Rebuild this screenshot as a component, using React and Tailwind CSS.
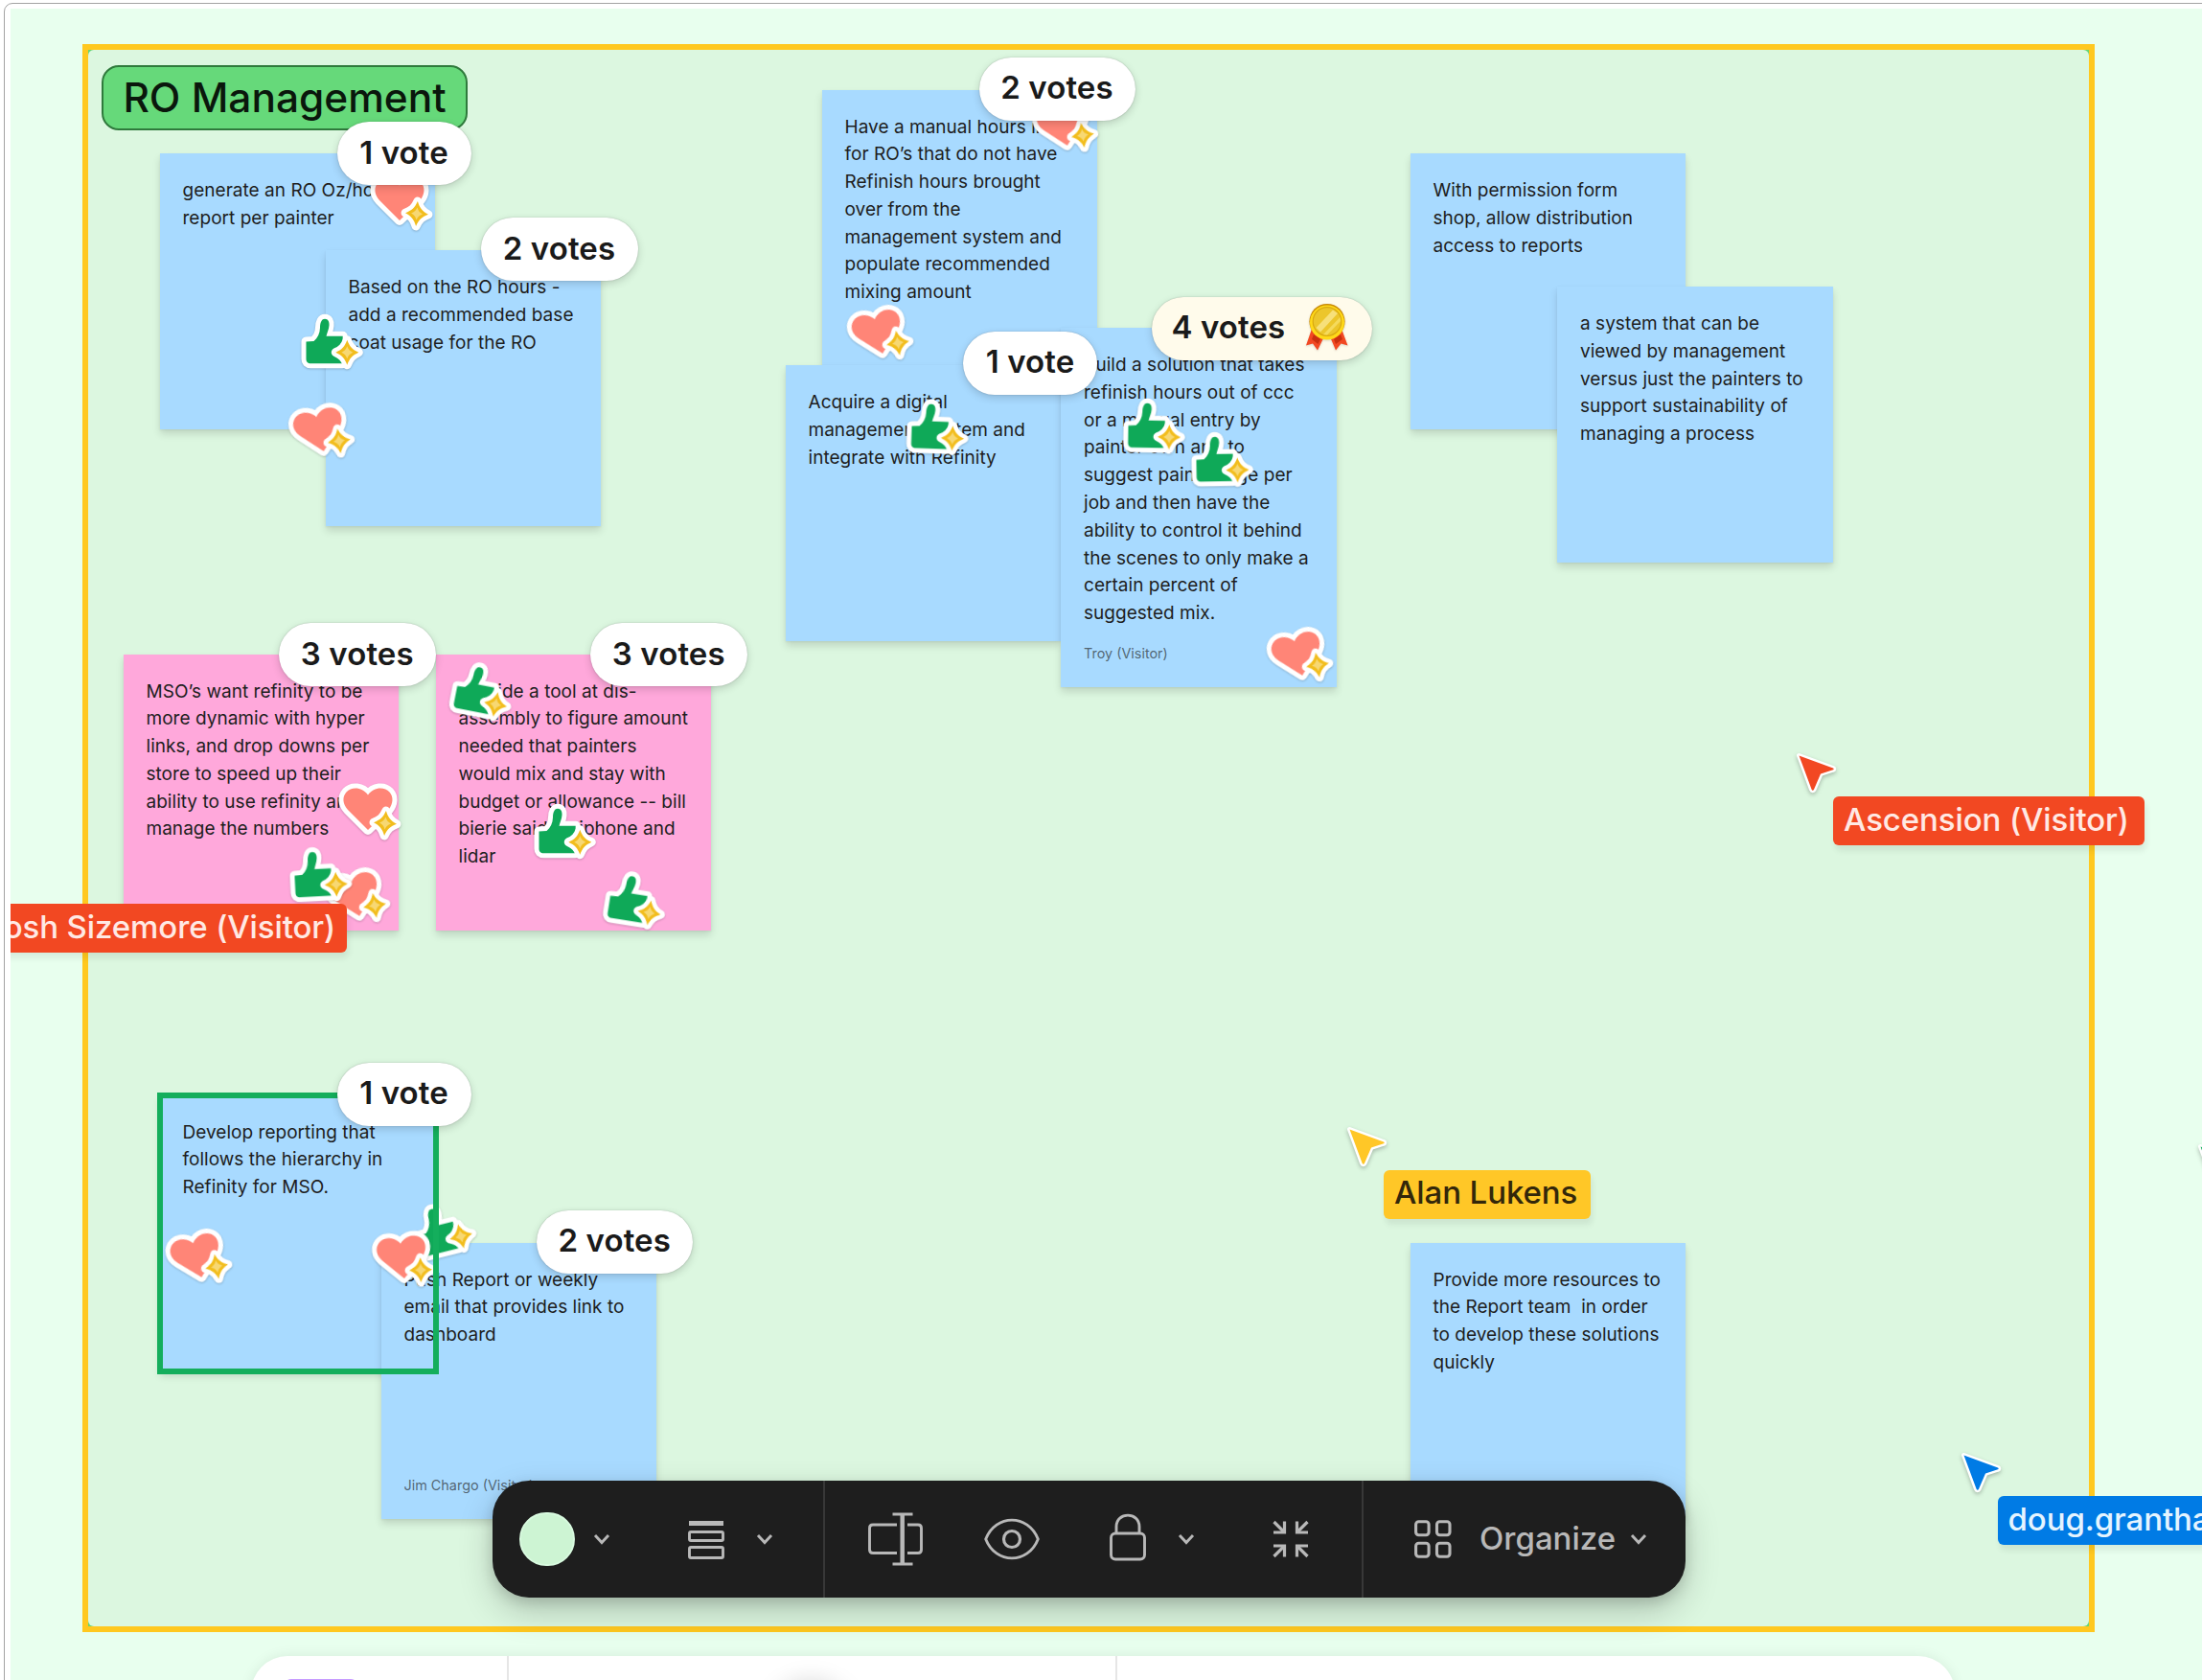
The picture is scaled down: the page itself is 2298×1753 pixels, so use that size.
import React from 'react';
import clsx from 'clsx';

const notes = [
  { x: 166.5, y: 160, lines: ['generate an RO Oz/hour', 'report per painter'] },
  { x: 339.5, y: 261, lines: ['Based on the RO hours -', 'add a recommended base', 'coat usage for the RO'] },
  {
    x: 857.5, y: 93.5,
    lines: ['Have a manual hours input', 'for RO’s that do not have', 'Refinish hours brought', 'over from the', 'management system and', 'populate recommended', 'mixing amount'],
  },
  { x: 819.5, y: 381, lines: ['Acquire a digital', 'management system and', 'integrate with Refinity'] },
  {
    x: 1107, y: 342, h: 375, author: 'Troy (Visitor)',
    lines: ['Build a solution that takes', 'refinish hours out of ccc', 'or a manual entry by', 'painter own and to', 'suggest paint usage per', 'job and then have the', 'ability to control it behind', 'the scenes to only make a', 'certain percent of', 'suggested mix.'],
  },
  { x: 1471.5, y: 160, lines: ['With permission form', 'shop, allow distribution', 'access to reports'] },
  {
    x: 1625, y: 299,
    lines: ['a system that can be', 'viewed by management', 'versus just the painters to', 'support sustainability of', 'managing a process'],
  },
  {
    x: 128.5, y: 682.5, pink: true,
    lines: ['MSO’s want refinity to be', 'more dynamic with hyper', 'links, and drop downs per', 'store to speed up their', 'ability to use refinity and', 'manage the numbers'],
  },
  {
    x: 454.5, y: 682.5, pink: true,
    lines: ['Provide a tool at dis-', 'assembly to figure amount', 'needed that painters', 'would mix and stay with', 'budget or allowance -- bill', 'bierie said an iphone and', 'lidar'],
  },
  { x: 166.5, y: 1142.5, lines: ['Develop reporting that', 'follows the hierarchy in', 'Refinity for MSO.'] },
  { x: 397.5, y: 1296.5, author: 'Jim Chargo (Visitor)', lines: ['Push Report or weekly', 'email that provides link to', 'dashboard'] },
  { x: 1471.5, y: 1296.5, lines: ['Provide more resources to', 'the Report team  in order', 'to develop these solutions', 'quickly'] },
];

// x / y are the centre of each sticker
const stickers = [
  { type: 'heart', x: 418, y: 212, r: 0 },
  { type: 'thumb', x: 344, y: 358, r: 0 },
  { type: 'heart', x: 335, y: 453, r: -12 },
  { type: 'heart', x: 1111, y: 134, r: -12 },
  { type: 'heart', x: 918, y: 351, r: -13 },
  { type: 'thumb', x: 976, y: 447, r: 2 },
  { type: 'thumb', x: 1202, y: 445.5, r: 1 },
  { type: 'thumb', x: 1272.5, y: 481, r: -1 },
  { type: 'heart', x: 1356, y: 687, r: -13 },
  { type: 'heart', x: 385, y: 848, r: 0 },
  { type: 'heart', x: 371.5, y: 938, r: -13 },
  { type: 'thumb', x: 332, y: 914, r: -3 },
  { type: 'thumb', x: 500.5, y: 722, r: 11 },
  { type: 'thumb', x: 587, y: 869, r: 0 },
  { type: 'thumb', x: 660.5, y: 939.5, r: 9 },
  { type: 'heart', x: 206.5, y: 1315, r: -14 },
  { type: 'thumb', x: 460.5, y: 1285, r: -14 },
  { type: 'heart', x: 420.5, y: 1316, r: -6 },
];

const votes = [
  { x: 351.5, y: 127, w: 140, text: '1 vote' },
  { x: 501.5, y: 227, w: 164, text: '2 votes' },
  { x: 1021.5, y: 59.5, w: 163, text: '2 votes' },
  { x: 1005, y: 345.5, w: 140, text: '1 vote' },
  { x: 1201.5, y: 309.5, w: 230, text: '4 votes', winner: true },
  { x: 291, y: 650, w: 163.5, text: '3 votes' },
  { x: 616, y: 650, w: 163.5, text: '3 votes' },
  { x: 351.5, y: 1108.5, w: 140, text: '1 vote' },
  { x: 559.5, y: 1262.5, w: 163.5, text: '2 votes' },
];

const cursors = [
  { x: 1877, y: 788, fill: '#f24822', tag: 'bg-[#f24822] text-[#ffe9e4]', name: 'Ascension (Visitor)', w: 325 },
  { x: 1408, y: 1177.5, fill: '#ffc727', tag: 'bg-[#ffc727] text-[#33270a]', name: 'Alan Lukens', w: 216 },
  { x: 2048.5, y: 1518, fill: '#007be5', tag: 'bg-[#007be5] text-[#e5f4ff]', name: 'doug.grantham', w: 260 },
  { x: 2295.5, y: 1196, fill: '#14ae5c' },
];

const STAR = 'M0 -13 C2.6 -6 5.5 -3 12 0 C5.5 3 2.6 6 0 13 C-2.6 6 -5.5 3 -12 0 C-5.5 -3 -2.6 -6 0 -13 Z';
const THUMB = 'M7.5 30.5 L15.5 30 C19.5 26.5 21.8 22 22 16 C22 10 24 6.7 27 6.7 C30.5 6.7 31.8 10 31.5 13.5 C31.2 17.5 29.5 21 28.5 24.7 L45.7 24.7 L45 53.3 L12.5 53.3 C9 53.3 7.5 51.5 7.5 48.5 Z';
const HEART = 'M31 50 L10 29 C4.2 22.5 4.2 15.5 8.5 10.5 C14 4.5 25 5 31 13.5 C37 5 48 4.5 53.5 10.5 C57.8 15.5 57.5 22.5 52.5 29 Z';

function Sticker({ type, x, y, r }) {
  const shape = type === 'heart' ? HEART : THUMB;
  const star = type === 'heart' ? 'translate(49 43) rotate(4)' : 'translate(50.3 41.7)';
  return (
    <svg
      viewBox="0 0 64 64"
      className="absolute h-16 w-16 overflow-visible drop-shadow-[0_1px_1px_rgba(0,0,0,0.2)]"
      style={{ left: x - 32, top: y - 32, transform: `rotate(${r}deg)` }}
    >
      <path d={shape} fill="#fff" stroke="#fff" strokeWidth="10" strokeLinejoin="round" />
      <path d={shape} fill={type === 'heart' ? '#ff8577' : '#0fa958'} />
      <g transform={star}>
        <path d={STAR} fill="#fff" stroke="#fff" strokeWidth="9" strokeLinejoin="round" />
        <path d={STAR} fill="#f2bd1d" />
        <path d={STAR} fill="#f7d873" transform="scale(0.5)" />
      </g>
    </svg>
  );
}

function Note({ x, y, h = 288, pink, author, lines }) {
  return (
    <div
      className={clsx(
        'absolute flex w-[287.5px] flex-col justify-between px-6 pt-[25px] pb-[23px] shadow-[0_5px_8px_rgba(0,0,0,0.13),0_1px_2px_rgba(0,0,0,0.06)]',
        pink ? 'bg-[#ffa8db]' : 'bg-[#a8daff]'
      )}
      style={{ left: x, top: y, height: h }}
    >
      <div className="text-[19px] leading-[28.8px] tracking-[0.03px] whitespace-pre text-[#1e1e1e]">
        {lines.map((line) => (
          <p key={line}>{line}</p>
        ))}
      </div>
      {author && <p className="text-[14.4px] leading-6 whitespace-nowrap text-[#1e1e1e]/65">{author}</p>}
    </div>
  );
}

function Medal() {
  return (
    <svg viewBox="0 0 48 52" className="h-[52px] w-12 overflow-visible drop-shadow-[0_1px_1px_rgba(0,0,0,0.15)]">
      <path d="M8 27 L2 44.5 L9 42.5 L14 49.5 L22 33 Z" fill="#f24822" />
      <path d="M39 27 L45.5 44.5 L38.5 42.5 L33 49.5 L26 33 Z" fill="#f24822" />
      <path d="M10 33 L17 38 L14.5 43 L8 38 Z M38 33 L31 38 L33 43 L40 38 Z" fill="#c9300f" />
      <circle cx="24" cy="19.5" r="18.6" fill="#c98a04" />
      <circle cx="24" cy="20.5" r="18" fill="#ffd91a" />
      <circle cx="24" cy="19.5" r="14.8" fill="#ecc62c" stroke="#d9a90f" strokeWidth="1.2" />
      <path d="M12.5 26 L30 7.5 L35 11 L17 30.5 Z" fill="#f7e07a" />
      <path d="M20 33 L37.5 15 L38 19 L24 33.5 Z" fill="#f5da5c" />
    </svg>
  );
}

function VoteBadge({ x, y, w, text, winner }) {
  return (
    <div
      className={clsx(
        'absolute flex h-[66px] items-center rounded-full pb-px text-[33px] font-[560] tracking-[0.1px] whitespace-nowrap text-[#1a1a1a] shadow-[0_3px_8px_rgba(0,0,0,0.16),0_0_1.5px_rgba(0,0,0,0.25)]',
        winner ? 'justify-between bg-[#fffbeb] pr-[23px] pl-[21px]' : 'justify-center bg-white'
      )}
      style={{ left: x, top: y, width: w }}
    >
      {text}
      {winner && <Medal />}
    </div>
  );
}

function Cursor({ x, y, fill, tag, name, w }) {
  return (
    <div className="absolute" style={{ left: x, top: y }}>
      <svg viewBox="0 0 40 40" className="absolute h-10 w-10 overflow-visible drop-shadow-[0_2px_2px_rgba(0,0,0,0.25)]">
        <path
          d="M0.5 0.5 L36 13.5 C37 14 36.8 15 36 15.2 L23 19.5 L16 35.8 C15.4 37.2 14 37 13.6 35.8 Z"
          fill={fill}
          stroke="#fff"
          strokeWidth="5"
          strokeLinejoin="round"
          paintOrder="stroke"
        />
      </svg>
      {name && <NameTag className={clsx('left-9 top-[43px] pl-[11px]', tag)} name={name} width={w} />}
    </div>
  );
}

function NameTag({ className, name, width }) {
  return (
    <div
      className={clsx(
        'absolute flex h-[51px] items-center rounded-md pb-[2px] text-[33px] font-[550] tracking-[-0.1px] whitespace-nowrap shadow-[2px_6px_6px_rgba(0,0,0,0.07)]',
        className
      )}
      style={{ width }}
    >
      {name}
    </div>
  );
}

function Icon({ children, className, w, h, stroke = 2.9 }) {
  return (
    <svg
      width={w}
      height={h}
      viewBox={`0 0 ${w} ${h}`}
      fill="none"
      stroke="#b8b8b8"
      strokeWidth={stroke}
      className={clsx('shrink-0', className)}
    >
      {children}
    </svg>
  );
}

function Chevron({ className }) {
  return (
    <Icon w={18} h={12} className={className}>
      <path d="M2 2 L9 9.5 L16 2" />
    </Icon>
  );
}

function Toolbar() {
  return (
    <div className="absolute left-[514px] top-[1545px] flex h-[121.5px] w-[1244.5px] rounded-[38px] bg-[#1e1e1e] shadow-[0_14px_36px_rgba(0,0,0,0.2),0_5px_14px_rgba(0,0,0,0.14)]">
      {/* Colour and list style */}
      <div className="flex w-[347px] items-center border-r-2 border-[#383838] pl-[28px]">
        <span className="h-[56px] w-[58px] shrink-0 rounded-full border-2 border-[#d8fadf] bg-[#cdf4d3]" />
        <Chevron className="ml-[19px]" />
        <Icon w={38} h={42} className="ml-[81px]">
          <path d="M1 4.5 H37" strokeWidth="5" />
          <rect x="1.5" y="13.5" width="35" height="9" rx="1.5" />
          <rect x="1.5" y="29.5" width="35" height="11" rx="1.5" />
        </Icon>
        <Chevron className="ml-[33px]" />
      </div>

      {/* Rename, visibility, lock, collapse */}
      <div className="flex w-[562px] items-center border-r-2 border-[#383838] pl-[45px]">
        <Icon w={57} h={58}>
          <path d="M30 14 H5 Q1.5 14 1.5 17.5 V40 Q1.5 43.5 5 43.5 H30 M41 14 H52 Q55.5 14 55.5 17.5 V40 Q55.5 43.5 52 43.5 H41" />
          <path d="M25.5 3 H46.5 M25.5 55 H46.5" />
          <path d="M35.7 3 V55" strokeWidth="4.5" />
        </Icon>
        <Icon w={58} h={44} className="ml-[64px]">
          <path d="M1.7 22 C12 -4.5 46 -4.5 56.3 22 C46 48.5 12 48.5 1.7 22 Z" strokeLinejoin="round" />
          <circle cx="29" cy="22" r="8.5" strokeWidth="3.2" />
        </Icon>
        <Icon w={38} h={50} className="mb-[3px] ml-[73px]">
          <rect x="1.5" y="21" width="35" height="27" rx="4.5" />
          <path d="M7 21 V14 C7 -1.8 31 -1.8 31 14 V21" />
        </Icon>
        <Chevron className="ml-[33px]" />
        <Icon w={38} h={40} className="ml-[81px]" stroke={3.2}>
          <path d="M1.5 2 L12 12.5 M36.5 2 L26 12.5 M1.5 38 L12 27.5 M36.5 38 L26 27.5" />
          <path d="M12.5 1.5 V13 H1 M25.5 1.5 V13 H37 M12.5 38.5 V27 H1 M25.5 38.5 V27 H37" />
        </Icon>
      </div>

      <div className="flex flex-1 items-center pl-[53px]">
        <Icon w={39} h={40} stroke={3.1}>
          <rect x="1.6" y="1.8" width="13.5" height="14" rx="3" />
          <rect x="23.5" y="1.8" width="13.5" height="14" rx="3" />
          <rect x="1.6" y="24.2" width="13.5" height="14" rx="3" />
          <rect x="23.5" y="24.2" width="13.5" height="14" rx="3" />
        </Icon>
        <span className="ml-[29px] w-[142px] text-[33px] font-medium text-[#b8b8b8]">Organize</span>
        <Chevron className="ml-[15px]" />
      </div>
    </div>
  );
}

export default function App() {
  return (
    <div className="relative h-[1753px] w-[2298px] overflow-hidden bg-white font-[Inter,sans-serif]">
      <div className="absolute left-[4px] top-[3px] h-[1800px] w-[2320px] rounded-tl-[9px] border border-[#a3a3a3]" />

      {/* Board */}
      <div className="absolute inset-0 [clip-path:inset(9px_0_0_11px)]">
        <div className="h-full bg-[#e8ffee]" />

        {/* Section frame */}
        <div className="absolute left-[86px] top-[46px] h-[1657px] w-[2100px] border-[6.5px] border-[#ffc81f] bg-[#66d575]">
          <div className="h-full w-full rounded-md bg-[#dcf7e0]" />
        </div>
        <div className="absolute left-[106px] top-[68px] flex h-[68px] w-[382px] items-center justify-center rounded-[18px] border-2 border-[#2f7a3c] bg-[#66d97a] pb-px text-[42.4px] font-medium whitespace-nowrap text-[#0a170c]">
          RO Management
        </div>

        {notes.map((note) => (
          <Note key={note.lines[0]} {...note} />
        ))}
        {stickers.map((s) => (
          <Sticker key={`${s.x}-${s.y}`} {...s} />
        ))}

        {/* Remote selection */}
        <div className="absolute left-[163.5px] top-[1140px] h-[294px] w-[294px] border-6 border-[#14ae5c]" />

        {votes.map((v) => (
          <VoteBadge key={`${v.x}-${v.y}`} {...v} />
        ))}
        {cursors.map((c) => (
          <Cursor key={c.fill + c.x} {...c} />
        ))}
        <NameTag className="-left-[22px] top-[943px] justify-end bg-[#f24822] pr-3 text-[#ffe9e4]" name="Josh Sizemore (Visitor)" width={384} />

        <Toolbar />

        {/* Bottom dock */}
        <div className="absolute left-[262px] top-[1728px] flex h-[120px] w-[1778px] overflow-hidden rounded-[38px] bg-white shadow-[0_0_14px_rgba(0,0,0,0.08)]">
          <div className="w-[269px] border-r-2 border-[#e6e6e6] pl-[34px] pt-6">
            <div className="h-20 w-[78px] rounded-lg bg-[#c79bff]" />
          </div>
          <div className="w-[635px] border-r-2 border-[#e6e6e6] pl-[285px] pt-[38px]">
            <div className="h-16 w-[60px] rounded-full shadow-[0_0_28px_8px_rgba(0,0,0,0.22)]" />
          </div>
        </div>
      </div>
    </div>
  );
}
